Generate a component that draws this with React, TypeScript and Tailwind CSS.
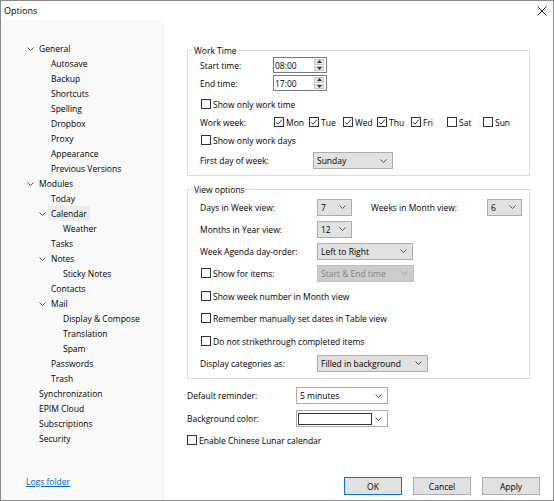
import type { ReactNode } from 'react';

type TreeItem = { label: string; level: 0 | 1 | 2; open?: boolean; selected?: boolean };

const tree: TreeItem[] = [
  { label: 'General', level: 0, open: true },
  { label: 'Autosave', level: 1 },
  { label: 'Backup', level: 1 },
  { label: 'Shortcuts', level: 1 },
  { label: 'Spelling', level: 1 },
  { label: 'Dropbox', level: 1 },
  { label: 'Proxy', level: 1 },
  { label: 'Appearance', level: 1 },
  { label: 'Previous Versions', level: 1 },
  { label: 'Modules', level: 0, open: true },
  { label: 'Today', level: 1 },
  { label: 'Calendar', level: 1, open: true, selected: true },
  { label: 'Weather', level: 2 },
  { label: 'Tasks', level: 1 },
  { label: 'Notes', level: 1, open: true },
  { label: 'Sticky Notes', level: 2 },
  { label: 'Contacts', level: 1 },
  { label: 'Mail', level: 1, open: true },
  { label: 'Display & Compose', level: 2 },
  { label: 'Translation', level: 2 },
  { label: 'Spam', level: 2 },
  { label: 'Passwords', level: 1 },
  { label: 'Trash', level: 1 },
  { label: 'Synchronization', level: 0 },
  { label: 'EPIM Cloud', level: 0 },
  { label: 'Subscriptions', level: 0 },
  { label: 'Security', level: 0 },
];

const indent = ['pl-[26px]', 'pl-[38px]', 'pl-[50px]'];

const days = [
  { d: 'Mon', on: true, w: 'w-[35px]' },
  { d: 'Tue', on: true, w: 'w-[34px]' },
  { d: 'Wed', on: true, w: 'w-[34px]' },
  { d: 'Thu', on: true, w: 'w-[34px]' },
  { d: 'Fri', on: true, w: 'w-[36px]' },
  { d: 'Sat', on: false, w: 'w-[36px]' },
  { d: 'Sun', on: false, w: 'w-[36px]' },
];

function Chevron({ className = '' }: { className?: string }) {
  return (
    <svg width="7" height="4" viewBox="0 0 7 4" className={className}>
      <path d="M0.5 0.5 L3.5 3.5 L6.5 0.5" fill="none" stroke="currentColor" strokeWidth="1" />
    </svg>
  );
}

function Check({ checked = false }: { checked?: boolean }) {
  return (
    <span className="w-[10px] h-[10px] border border-[#333333] bg-white flex items-center justify-center shrink-0">
      {checked && (
        <svg width="8" height="8" viewBox="0 0 8 8">
          <path d="M1 4.2 L3 6.2 L7 1.5" fill="none" stroke="#333333" strokeWidth="1" />
        </svg>
      )}
    </span>
  );
}

function CheckRow({ label, checked }: { label: string; checked?: boolean }) {
  return (
    <div className="flex items-center gap-[2px] pl-[1px]">
      <Check checked={checked} />
      <span>{label}</span>
    </div>
  );
}

function Select({ value, className, disabled }: { value: string; className: string; disabled?: boolean }) {
  return (
    <div
      className={
        'h-[17px] border flex items-center justify-between pl-[3px] pr-[5px] ' +
        (disabled ? 'bg-[#cccccc] border-[#bfbfbf] text-[#838383] ' : 'bg-[#e1e1e1] border-[#adadad] ') +
        className
      }
    >
      <span>{value}</span>
      <Chevron className={disabled ? 'text-[#a0a0a0]' : 'text-[#555555]'} />
    </div>
  );
}

function Spin({ value }: { value: string }) {
  return (
    <div className="w-[54px] h-[16px] border border-[#7a7a7a] bg-white flex items-center">
      <span className="flex-1 pl-[1px]">{value}</span>
      <div className="w-[10px] h-[12px] mr-[2px] flex flex-col gap-[1px]">
        <span className="flex-1 bg-[#e6e6e6] border border-[#c8c8c8] flex items-center justify-center">
          <svg width="5" height="3" viewBox="0 0 5 3">
            <path d="M0 3 L2.5 0 L5 3 Z" fill="#333333" />
          </svg>
        </span>
        <span className="flex-1 bg-[#e6e6e6] border border-[#c8c8c8] flex items-center justify-center">
          <svg width="5" height="3" viewBox="0 0 5 3">
            <path d="M0 0 L2.5 3 L5 0 Z" fill="#333333" />
          </svg>
        </span>
      </div>
    </div>
  );
}

function Group({ title, className, children }: { title: string; className: string; children: ReactNode }) {
  return (
    <div className={'relative border border-[#dcdcdc] ' + className}>
      <span className="absolute left-[5px] top-[-7px] bg-white px-[1px] leading-[13px]">{title}</span>
      {children}
    </div>
  );
}

function Button({ label, focused }: { label: string; focused?: boolean }) {
  return (
    <div
      className={
        'w-[58px] h-[18px] bg-[#e1e1e1] flex items-center justify-center border ' +
        (focused ? 'border-[#0078d7]' : 'border-[#adadad]')
      }
    >
      {label}
    </div>
  );
}

export default function App() {
  return (
    <div className="w-[554px] h-[501px] border border-[#8a8a8a] bg-white flex flex-col text-[8.5px] leading-[13px] text-black font-['Segoe_UI','Open_Sans',Arial,sans-serif]">
      <div className="h-[19px] flex items-center justify-between pl-[3px] pr-[6px] shrink-0">
        <span className="text-[9px]">Options</span>
        <svg width="10" height="10" viewBox="0 0 10 10">
          <path d="M0.5 0.5 L9.5 9.5 M9.5 0.5 L0.5 9.5" stroke="#111111" strokeWidth="0.9" />
        </svg>
      </div>

      <div className="flex flex-1 min-h-0">
        <div className="w-[163px] bg-[#f9f9f9] border-r border-[#efefef] flex flex-col pt-[21px] shrink-0">
          {tree.map((t) => (
            <div key={t.label} className={'h-[15px] flex items-center ' + indent[t.level]}>
              <span className="w-[12px] flex items-center">
                {t.open && <Chevron className="text-[#555555]" />}
              </span>
              <span className={t.selected ? 'bg-[#ececec] -ml-[3px] px-[3px] h-[15px] flex items-center' : ''}>
                {t.label}
              </span>
            </div>
          ))}
          <div className="mt-auto mb-[11px] pl-[25px] h-[15px] flex items-center">
            <span className="text-[#0066cc] underline">Logs folder</span>
          </div>
        </div>

        <div className="flex-1 flex flex-col">
          <div className="px-[23px] pt-[30px]">
            <Group title="Work Time" className="pt-[6px] pb-[6px] pl-[12px]">
              <div className="h-[16px] flex items-center">
                <span className="w-[73px]">Start time:</span>
                <Spin value="08:00" />
              </div>
              <div className="h-[16px] mt-[2px] flex items-center">
                <span className="w-[73px]">End time:</span>
                <Spin value="17:00" />
              </div>
              <div className="h-[18px] mt-[4px] flex items-center">
                <CheckRow label="Show only work time" />
              </div>
              <div className="h-[18px] flex items-center">
                <span className="w-[74px]">Work week:</span>
                {days.map((d) => (
                  <div key={d.d} className={'flex items-center gap-[2px] ' + d.w}>
                    <Check checked={d.on} />
                    <span>{d.d}</span>
                  </div>
                ))}
              </div>
              <div className="h-[18px] flex items-center">
                <CheckRow label="Show only work days" />
              </div>
              <div className="h-[17px] mt-[3px] flex items-center">
                <span className="w-[113px]">First day of week:</span>
                <Select value="Sunday" className="w-[80px]" />
              </div>
            </Group>

            <Group title="View options" className="mt-[13px] pt-[6px] pb-[4px] pl-[12px]">
              <div className="h-[22px] flex items-center">
                <span className="w-[117px]">Days in Week view:</span>
                <Select value="7" className="w-[35px]" />
                <span className="w-[116px] ml-[19px]">Weeks in Month view:</span>
                <Select value="6" className="w-[35px]" />
              </div>
              <div className="h-[22px] flex items-center">
                <span className="w-[117px]">Months in Year view:</span>
                <Select value="12" className="w-[35px]" />
              </div>
              <div className="h-[22px] flex items-center">
                <span className="w-[117px]">Week Agenda day-order:</span>
                <Select value="Left to Right" className="w-[96px]" />
              </div>
              <div className="h-[22px] flex items-center">
                <div className="w-[117px]">
                  <CheckRow label="Show for items:" />
                </div>
                <Select value="Start & End time" className="w-[97px]" disabled />
              </div>
              <div className="h-[22px] mt-[1px] flex items-center">
                <CheckRow label="Show week number in Month view" />
              </div>
              <div className="h-[22px] flex items-center">
                <CheckRow label="Remember manually set dates in Table view" />
              </div>
              <div className="h-[22px] mt-[1px] flex items-center">
                <CheckRow label="Do not strikethrough completed items" />
              </div>
              <div className="h-[22px] flex items-center">
                <span className="w-[117px]">Display categories as:</span>
                <Select value="Filled in background" className="w-[111px]" />
              </div>
            </Group>

            <div className="mt-[8px] h-[17px] flex items-center">
              <span className="w-[109px]">Default reminder:</span>
              <div className="w-[92px] h-[17px] border border-[#adadad] bg-white flex items-center justify-between pl-[3px] pr-[5px]">
                <span>5 minutes</span>
                <Chevron className="text-[#555555]" />
              </div>
            </div>
            <div className="mt-[6px] h-[17px] flex items-center">
              <span className="w-[109px]">Background color:</span>
              <div className="w-[92px] h-[17px] border border-[#adadad] bg-white flex items-center justify-between pl-[1px] pr-[5px]">
                <span className="w-[74px] h-[12px] border border-[#333333] bg-white" />
                <Chevron className="text-[#555555]" />
              </div>
            </div>
            <div className="mt-[6px] h-[14px] flex items-center">
              <div className="flex items-center gap-[2px]">
                <Check />
                <span>Enable Chinese Lunar calendar</span>
              </div>
            </div>
          </div>

          <div className="mt-auto mb-[5px] pr-[13px] flex justify-end gap-[11px]">
            <Button label="OK" focused />
            <Button label="Cancel" />
            <Button label="Apply" />
          </div>
        </div>
      </div>
    </div>
  );
}
